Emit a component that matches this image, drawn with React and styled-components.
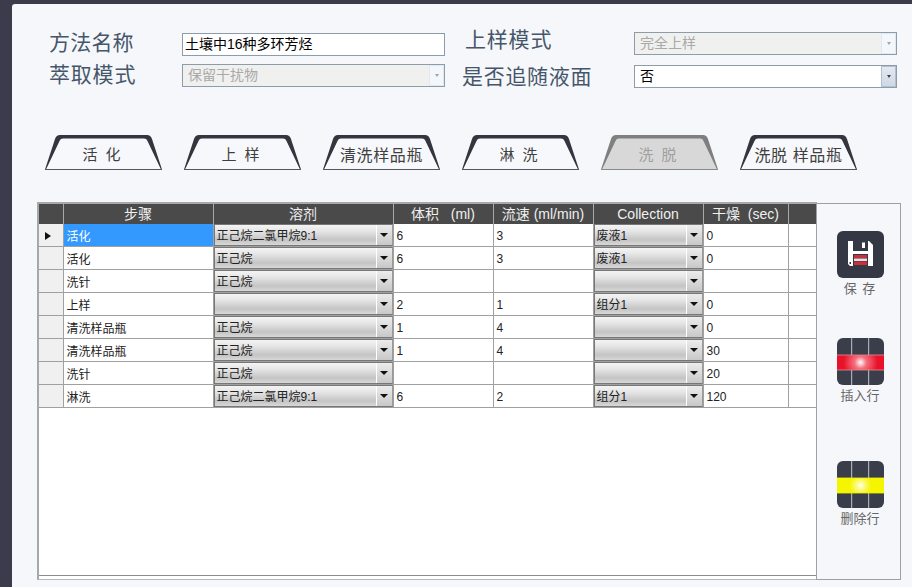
import React from 'react';
import styled, { createGlobalStyle } from 'styled-components';

const CJK = `"Liberation Sans", "Noto Sans CJK SC", sans-serif`;

const GlobalStyle = createGlobalStyle`
  html, body {
    margin: 0;
    padding: 0;
    background: #3a3c4b;
    overflow: hidden;
  }
`;

const Panel = styled.div`
  width: 900px;
  height: 583px;
  margin: 4px 0 0 12px;
  background: #f6f7fb;
  border-top-left-radius: 3px;
  font-family: ${CJK};
  box-sizing: border-box;
  overflow: hidden;
`;

const Form = styled.div`
  display: flex;
  height: 131px;
  box-sizing: border-box;
`;

const FormColumn = styled.div`
  width: ${(p) => p.width}px;
  padding-top: ${(p) => p.top}px;
  display: flex;
  flex-direction: column;
  gap: ${(p) => p.gap}px;
  box-sizing: border-box;
`;

const FormRow = styled.div`
  display: flex;
  align-items: center;
  height: 23px;
`;

const Label = styled.div`
  width: ${(p) => p.width}px;
  margin-left: ${(p) => p.left}px;
  font-size: 21px;
  letter-spacing: ${(p) => p.spacing}px;
  color: #45566a;
  white-space: nowrap;
  position: relative;
  top: ${(p) => p.shift || 0}px;
`;

const Field = styled.div`
  width: 263px;
  height: 23px;
  box-sizing: border-box;
  border: 1px solid #8c9cab;
  background: ${(p) => (p.disabled ? '#f0f0ef' : '#fff')};
  color: ${(p) => (p.disabled ? '#a9a9a9' : '#000')};
  display: flex;
  align-items: center;
  justify-content: space-between;
  font-size: 14px;
  line-height: 19px;
  padding-left: ${(p) => p.pad}px;
  white-space: nowrap;
`;

const FieldArrow = styled.div`
  width: 15px;
  height: 21px;
  box-sizing: border-box;
  border: 1px solid ${(p) => (p.disabled ? '#e2e8f0' : '#b5c0cd')};
  background: ${(p) => (p.disabled ? '#f3f6fb' : 'linear-gradient(#e4e9f2, #cfd8e6)')};
  display: flex;
  align-items: center;
  justify-content: center;

  &::after {
    content: '';
    border-left: 2.5px solid transparent;
    border-right: 2.5px solid transparent;
    border-top: 3px solid ${(p) => (p.disabled ? '#a0a5ad' : '#3d4450')};
  }
`;

const Tabs = styled.div`
  display: flex;
  gap: 22px;
  padding-left: 33px;
`;

const Tab = styled.div`
  position: relative;
  width: 117px;
  height: 35px;
  display: flex;
  align-items: center;
  justify-content: center;
  font-size: ${(p) => (p.wide ? 16 : 15)}px;
  letter-spacing: ${(p) => (p.wide ? 0.6 : 2)}px;
  color: ${(p) => (p.off ? '#a0a0a0' : '#3f3f3f')};
  white-space: pre;

  svg {
    position: absolute;
    inset: 0;
  }

  span {
    position: relative;
    top: 1px;
    left: ${(p) => (p.wide ? 0 : -1)}px;
  }
`;

const Workspace = styled.div`
  display: flex;
  align-items: flex-start;
  margin: 32px 0 0 25px;
`;

const TableFrame = styled.div`
  width: 780px;
  height: 378px;
  box-sizing: border-box;
  border-top: 2px solid #a8a8a8;
  border-left: 2px solid #a8a8a8;
  border-right: 1px solid #a8a8a8;
  border-bottom: 1px solid #b8b8b8;
  background: #fff;
`;

const GridArea = styled.div`
  height: 372px;
  box-sizing: border-box;
  border-bottom: 1px solid #8d8d8d;
`;

const Grid = styled.table`
  width: 777px;
  table-layout: fixed;
  border-collapse: collapse;
  font-size: 12px;
`;

const HeadCell = styled.th`
  height: 20px;
  padding: 0;
  background: #4a4a4a;
  color: #f0f0f0;
  font-weight: 400;
  font-size: 14px;
  text-align: center;
  border-right: 1px solid #a8a8a8;
  white-space: pre;
  line-height: 19px;
  &:last-child {
    border-right: 0;
  }
`;

const RowHead = styled.td`
  height: 22px;
  padding: 0;
  background: #f0f0f0;
  border-right: 1px solid #a0a0a0;
  border-bottom: 1px solid #a0a0a0;
  text-align: center;
`;

const Pointer = styled.span`
  display: inline-block;
  border-top: 4.5px solid transparent;
  border-bottom: 4.5px solid transparent;
  border-left: 6px solid #111;
  vertical-align: middle;
  margin-right: 5px;
`;

const Cell = styled.td`
  height: 22px;
  padding: 1px 0 0 3px;
  box-sizing: border-box;
  background: ${(p) => (p.selected ? '#3399ff' : '#fff')};
  color: ${(p) => (p.selected ? '#fff' : '#222')};
  border-right: 1px solid #a0a0a0;
  border-bottom: 1px solid #a0a0a0;
  white-space: nowrap;
  overflow: hidden;
  &:last-child {
    border-right: 0;
  }
`;

const ComboCell = styled.td`
  height: 22px;
  padding: 0;
  border-right: 1px solid #a0a0a0;
  border-bottom: 1px solid #a0a0a0;
`;

const Combo = styled.div`
  height: 22px;
  box-sizing: border-box;
  border: 1px solid #777;
  border-right-color: #9a9a9a;
  display: flex;
  color: #222;
  background: #fff;
`;

const ComboText = styled.div`
  flex: 1;
  padding-left: 2px;
  line-height: 23px;
  background: linear-gradient(#f4f4f4 0%, #e6e6e6 30%, #c4c4c4 75%, #d8d8d8 100%);
  white-space: nowrap;
  overflow: hidden;
`;

const ComboArrow = styled.div`
  width: 15px;
  margin-left: 1px;
  background: linear-gradient(#ececec, #c8c8c8);
  display: flex;
  align-items: center;
  justify-content: center;

  &::after {
    content: '';
    border-left: 4px solid transparent;
    border-right: 4px solid transparent;
    border-top: 4px solid #111;
  }
`;

const Side = styled.div`
  width: 85px;
  height: 377px;
  box-sizing: border-box;
  border: 1px solid #a0a0a0;
  margin: 1px 0 0 -1px;
  display: flex;
  flex-direction: column;
  align-items: center;
  padding: 27px 0 0 3px;
`;

const ToolButton = styled.div`
  display: flex;
  flex-direction: column;
  align-items: center;
  flex-shrink: 0;
  height: 66px;
  margin-bottom: ${(p) => p.after}px;
  font-size: 13px;
  letter-spacing: ${(p) => p.spacing || 0}px;
  color: #666;
  white-space: pre;

  svg {
    flex-shrink: 0;
  }
`;

const columns = [24, 150, 180, 100, 100, 110, 85, 28];
const heads = ['', '步骤', '溶剂', '体积   (ml)', '流速 (ml/min)', 'Collection', '干燥  (sec)', ''];

const rows = [
  { step: '活化', solvent: '正己烷二氯甲烷9:1', volume: '6', flow: '3', collection: '废液1', dry: '0', current: true },
  { step: '活化', solvent: '正己烷', volume: '6', flow: '3', collection: '废液1', dry: '0' },
  { step: '洗针', solvent: '正己烷', volume: '', flow: '', collection: '', dry: '' },
  { step: '上样', solvent: '', volume: '2', flow: '1', collection: '组分1', dry: '0' },
  { step: '清洗样品瓶', solvent: '正己烷', volume: '1', flow: '4', collection: '', dry: '0' },
  { step: '清洗样品瓶', solvent: '正己烷', volume: '1', flow: '4', collection: '', dry: '30' },
  { step: '洗针', solvent: '正己烷', volume: '', flow: '', collection: '', dry: '20' },
  { step: '淋洗', solvent: '正己烷二氯甲烷9:1', volume: '6', flow: '2', collection: '组分1', dry: '120' },
];

const tabs = [
  { text: '活 化' },
  { text: '上 样' },
  { text: '清洗样品瓶', wide: true },
  { text: '淋 洗' },
  { text: '洗 脱', off: true },
  { text: '洗脱 样品瓶', wide: true },
];

const TabShape = ({ off }) => (
  <svg width="117" height="35" viewBox="0 0 117 35">
    <path
      d="M0 34.5 L10 4 Q11.3 0 15 0 L102 0 Q105.7 0 107 4 L117 34.5 Z"
      fill={off ? '#7f7f7f' : '#33353f'}
    />
    <path
      d="M1 34.5 L14.5 6 Q15.5 3.6 18 3.6 L99 3.6 Q101.5 3.6 102.5 6 L116 34.5 Z"
      fill={off ? '#d8d8d8' : '#f7f8fb'}
    />
    <path d="M0 34.5 L117 34.5" stroke={off ? '#8a8a8a' : '#55565c'} strokeWidth="1" />
  </svg>
);

const SaveIcon = () => (
  <svg width="47" height="47" viewBox="0 0 47 47">
    <rect width="47" height="47" rx="6" fill="#343845" />
    <path d="M11 10 H32 L36 14 V35 H13 L11 33 Z" fill="#fff" />
    <rect x="16" y="10" width="15" height="10" fill="#343845" />
    <rect x="25" y="11.5" width="3" height="5.5" fill="#fff" />
    <rect x="16" y="23" width="15" height="12" fill="#343845" />
    <rect x="17" y="24" width="13" height="3" fill="#c8303e" />
    <rect x="17" y="27.5" width="13" height="2.5" fill="#f2d9dc" />
    <rect x="17" y="30.5" width="13" height="3.5" fill="#c8303e" />
    <rect x="12.5" y="31" width="1.5" height="2" fill="#343845" />
  </svg>
);

const RowIcon = ({ id, color, mid, radius, edge }) => (
  <svg width="47" height="47" viewBox="0 0 47 47">
    <defs>
      <radialGradient id={id} gradientUnits="userSpaceOnUse" cx="23.5" cy="24.5" r={radius}>
        <stop offset="0%" stopColor="#fff" />
        <stop offset="35%" stopColor={mid} />
        <stop offset="100%" stopColor={color} />
      </radialGradient>
    </defs>
    <rect width="47" height="47" rx="6" fill="#3a3e4b" />
    <rect x="14" width="1.2" height="47" fill="#a9acb2" />
    <rect x="31" width="1.2" height="47" fill="#a9acb2" />
    <rect x="0" y="17" width="47" height="15" fill={`url(#${id})`} />
    <path d="M0 17 H47 M0 32 H47" stroke={edge} strokeWidth="0.8" />
  </svg>
);

const App = () => (
  <>
    <GlobalStyle />
    <Panel>
      <Form>
        <FormColumn width={440} top={29} gap={8}>
          <FormRow>
            <Label width={133} left={37} shift={-4} spacing={0.2}>方法名称</Label>
            <Field pad={2}>土壤中16种多环芳烃</Field>
          </FormRow>
          <FormRow>
            <Label width={133} left={37} shift={-3} spacing={0.8}>萃取模式</Label>
            <Field disabled pad={5}>
              保留干扰物
              <FieldArrow disabled />
            </Field>
          </FormRow>
        </FormColumn>
        <FormColumn width={460} top={28} gap={10}>
          <FormRow>
            <Label width={169} left={13} shift={-6} spacing={0.8}>上样模式</Label>
            <Field disabled pad={5}>
              完全上样
              <FieldArrow disabled />
            </Field>
          </FormRow>
          <FormRow>
            <Label width={172} left={10} shift={-2} spacing={0.7}>是否追随液面</Label>
            <Field pad={5}>
              否
              <FieldArrow />
            </Field>
          </FormRow>
        </FormColumn>
      </Form>
      <Tabs>
        {tabs.map((tab) => (
          <Tab key={tab.text} off={tab.off} wide={tab.wide}>
            <TabShape off={tab.off} />
            <span>{tab.text}</span>
          </Tab>
        ))}
      </Tabs>
      <Workspace>
        <TableFrame>
          <GridArea>
            <Grid>
              <colgroup>
                {columns.map((w, i) => (
                  <col key={i} style={{ width: w }} />
                ))}
              </colgroup>
              <thead>
                <tr>
                  {heads.map((h, i) => (
                    <HeadCell key={i}>{h}</HeadCell>
                  ))}
                </tr>
              </thead>
              <tbody>
                {rows.map((row, i) => (
                  <tr key={i}>
                    <RowHead>{row.current && <Pointer />}</RowHead>
                    <Cell selected={row.current}>{row.step}</Cell>
                    <ComboCell>
                      <Combo>
                        <ComboText>{row.solvent}</ComboText>
                        <ComboArrow />
                      </Combo>
                    </ComboCell>
                    <Cell>{row.volume}</Cell>
                    <Cell>{row.flow}</Cell>
                    <ComboCell>
                      <Combo>
                        <ComboText>{row.collection}</ComboText>
                        <ComboArrow />
                      </Combo>
                    </ComboCell>
                    <Cell>{row.dry}</Cell>
                    <Cell />
                  </tr>
                ))}
              </tbody>
            </Grid>
          </GridArea>
        </TableFrame>
        <Side>
          <ToolButton spacing={1} after={41}>
            <SaveIcon />
            保 存
          </ToolButton>
          <ToolButton after={57}>
            <RowIcon id="insertGlow" color="#e8132a" mid="#f4707e" radius="17" edge="#e98a92" />
            插入行
          </ToolButton>
          <ToolButton after={0}>
            <RowIcon id="deleteGlow" color="#f5f500" mid="#fbfb80" radius="11" edge="#f5f500" />
            删除行
          </ToolButton>
        </Side>
      </Workspace>
    </Panel>
  </>
);

export default App;
